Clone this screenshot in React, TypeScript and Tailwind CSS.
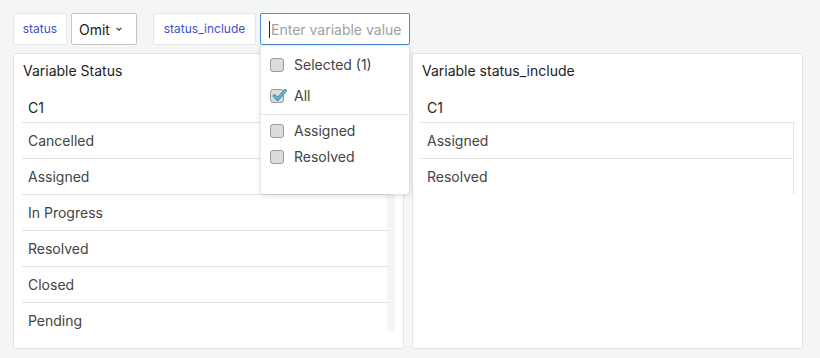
import React from 'react'

const statusRows = ['Cancelled', 'Assigned', 'In Progress', 'Resolved', 'Closed', 'Pending']
const includeRows = ['Assigned', 'Resolved']

function Checkbox({ checked }: { checked?: boolean }) {
  return (
    <span className="relative inline-block w-[14px] h-[14px] rounded-[3px] border border-[#9a9a9a] bg-[#dcdcdc]">
      {checked && (
        <svg viewBox="0 0 16 16" className="absolute left-[1px] top-[-2px] w-[15px] h-[15px]">
          <path d="M2.5 8.5 L6 12 L14 3" fill="none" stroke="#3a6f86" strokeWidth="3.4" strokeLinecap="round" strokeLinejoin="round" />
          <path d="M2.5 8.5 L6 12 L14 3" fill="none" stroke="#4cc6ea" strokeWidth="2" strokeLinecap="round" strokeLinejoin="round" />
        </svg>
      )}
    </span>
  )
}

function Panel({ title, rows, scroll }: { title: string; rows: string[]; scroll?: boolean }) {
  return (
    <div className="flex-1 h-[296px] bg-white border border-[#e2e4e4] rounded-[2px] pt-[8px] px-[8px] flex flex-col">
      <div className="text-[14px] text-[#222] leading-[17px] pl-[1px]">{title}</div>
      <div className="relative mt-[11px] h-[242px] overflow-hidden">
        <div className="h-[32px] pt-[9px] pl-[6px] text-[14px] text-[#222] leading-[17px]">C1</div>
        <div className={scroll ? '' : 'border-r border-[#e2e4e4]'}>
          {rows.map((r) => (
            <div key={r} className="h-[36px] border-t border-[#e2e4e4] pl-[6px] flex items-center text-[14px] text-[#444]">
              {r}
            </div>
          ))}
        </div>
        {scroll && <div className="absolute right-0 top-0 bottom-0 w-[8px] rounded-b-[4px] bg-[#f1f2f2]/80" />}
      </div>
    </div>
  )
}

export default function App() {
  return (
    <div className="w-[820px] h-[358px] bg-[#f4f5f5] px-[13px] pt-[13px] font-['Inter',sans-serif] relative">
      {/* variable bar */}
      <div className="flex items-center h-[32px]">
        <div className="h-[32px] w-[54px] flex items-center justify-center bg-white border border-[#e6e8e8] rounded-[2px] text-[12px] text-[#4050c8]">
          status
        </div>
        <button className="ml-[4px] h-[32px] w-[66px] pl-[7px] flex items-center gap-[5px] bg-white border border-[#c4c4c4] rounded-[2px] text-[14px] text-[#222]">
          Omit
          <svg viewBox="0 0 10 10" className="w-[8px] h-[8px]">
            <path d="M2 3.5 L5 6.5 L8 3.5" fill="none" stroke="#333" strokeWidth="1.4" />
          </svg>
        </button>
        <div className="ml-[16px] h-[32px] w-[103px] flex items-center justify-center bg-white border border-[#e6e8e8] rounded-[2px] text-[12px] text-[#4050c8]">
          status_include
        </div>
        <div className="relative ml-[4px]">
          <div className="h-[32px] w-[150px] pl-[8px] flex items-center bg-white border border-[#4a8fe0] rounded-[2px] text-[14px] text-[#a0a0a0]">
            <span className="w-[1px] h-[17px] bg-[#222] mr-[1px]" />
            Enter variable value
          </div>
          {/* dropdown */}
          <div className="absolute left-[1px] top-[33px] w-[148px] h-[148px] bg-white rounded-[4px] shadow-[0_1px_6px_rgba(0,0,0,0.18)] z-10 text-[14px] text-[#444]">
            <div className="pt-[10px] px-[9px] flex flex-col">
              <div className="h-[17px] flex items-center gap-[10px]"><Checkbox /> Selected (1)</div>
              <div className="h-[17px] mt-[14px] flex items-center gap-[10px]"><Checkbox checked /> All</div>
            </div>
            <div className="mt-[10px] border-t border-[#e2e4e4]" />
            <div className="pt-[7px] px-[9px] flex flex-col">
              <div className="h-[17px] flex items-center gap-[10px]"><Checkbox /> Assigned</div>
              <div className="h-[17px] mt-[9px] flex items-center gap-[10px]"><Checkbox /> Resolved</div>
            </div>
          </div>
        </div>
      </div>
      {/* panels */}
      <div className="mt-[8px] flex gap-[8px] w-[790px]">
        <Panel title="Variable Status" rows={statusRows} scroll />
        <Panel title="Variable status_include" rows={includeRows} />
      </div>
    </div>
  )
}
